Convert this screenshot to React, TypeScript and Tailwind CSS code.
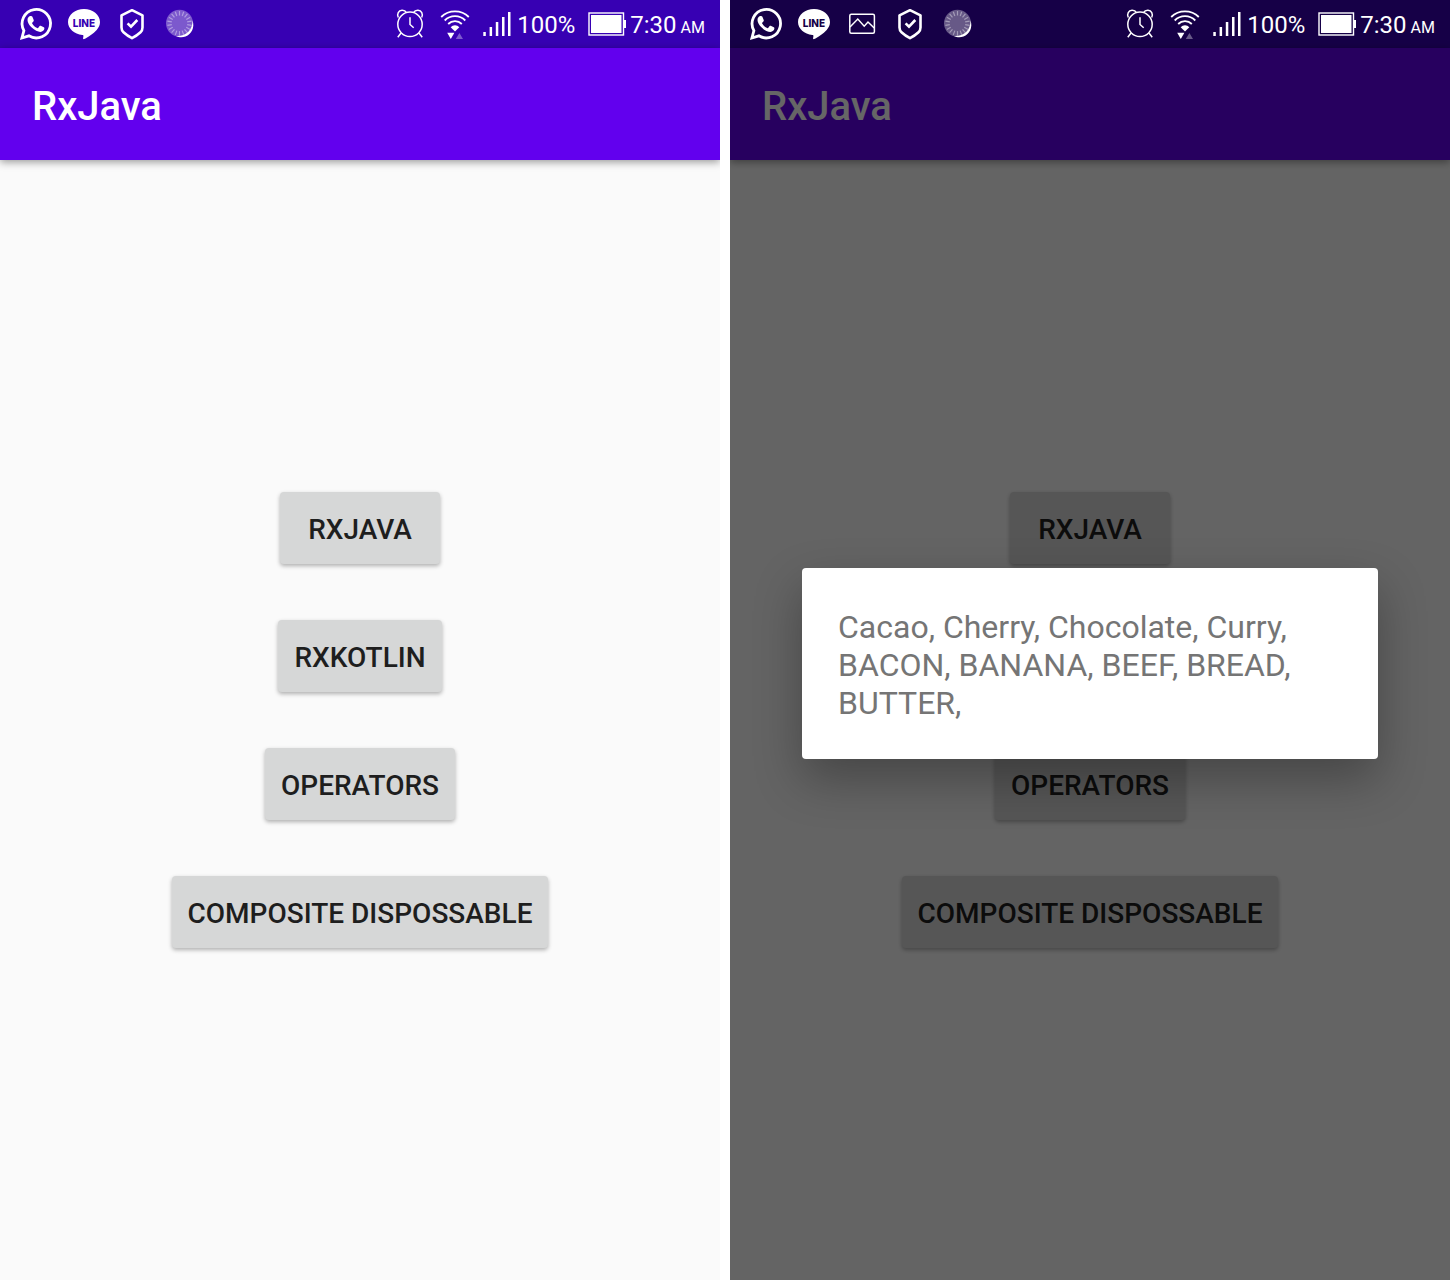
import React from "react";

const actions = ["RXJAVA", "RXKOTLIN", "OPERATORS", "COMPOSITE DISPOSSABLE"];

function WhatsAppIcon() {
  return (
    <svg className="size-12 shrink-0" viewBox="0 0 48 48" fill="none" aria-label="WhatsApp">
      <path
        d="M10.6 38.600 12.600 31.2A14.200 14.200 0 1 1 17.600 36.400Z"
        transform="translate(-.7 -.6)"
        stroke="#fff"
        strokeWidth="2.800"
        strokeLinejoin="miter"
      />
      <path
        d="M18.200 16.1c.9-.4 1.8-.2 2.2.7l1.3 3.1c.2.6.1 1-.3 1.5l-1.2 1.4c-.2.3-.2.5 0 .8 1.2 2 2.8 3.5 5 4.5.4.2.7.1.9-.2l1.5-1.8c.3-.4.6-.5 1.1-.3l3.1 1.5c.5.3.6.5.6 1-.1 2-1.900 3.500-3.900 3.600-2.200.1-5.900-1.400-8.800-4.300-2.600-2.600-4.200-5.300-4.200-7.700 0-1.600 1.100-3.200 2.700-3.800Z"
        fill="#fff"
      />
    </svg>
  );
}

function LineIcon({ ink }: { ink: string }) {
  return (
    <svg className="size-12 shrink-0" viewBox="0 0 48 48" aria-label="LINE">
      <path
        d="M24 9C32.800 9 40 14.700 40 22c0 3-1.200 5.500-3.300 7.900C33.600 33.400 27.500 37.500 24.200 39c-1 .4-1.200 0-1.100-.8l.3-2c.1-.8-.2-1.100-1-1.200C14.300 34.200 8 28.700 8 22 8 14.700 15.200 9 24 9Z"
        fill="#fff"
      />
      <text
        x="24"
        y="26.500"
        textAnchor="middle"
        className="font-['Inter',sans-serif] text-[10px] font-extrabold"
        fill={ink}
      >
        LINE
      </text>
    </svg>
  );
}

function PictureIcon() {
  return (
    <svg className="size-12 shrink-0" viewBox="0 0 48 48" fill="none" stroke="#fff" strokeWidth="1.500" aria-label="Picture">
      <rect x="11.800" y="14.300" width="24.600" height="19" rx="1.500" />
      <path d="M12 27 19.800 19 26.200 26.200 30 22 36.200 28" />
    </svg>
  );
}

function ShieldIcon() {
  return (
    <svg className="size-12 shrink-0" viewBox="0 0 48 48" fill="none" stroke="#fff" strokeWidth="2.600" aria-label="Protected">
      <path d="M24 10.200 34.500 15.300V27.500c0 2-.6 3.400-2 4.700C30.200 34.300 27.300 36.400 24 38.200 20.700 36.400 17.800 34.300 15.500 32.200c-1.400-1.300-2-2.700-2-4.700V15.300Z" strokeLinejoin="round" />
      <path d="m19.600 23.400 3.400 3.300 6.300-6.700" />
    </svg>
  );
}

function SpinnerIcon() {
  const ticks = Array.from({ length: 18 }, (_, i) => i * 20);
  return (
    <svg className="size-12 shrink-0" viewBox="0 0 48 48" aria-label="Loading">
      <circle cx="23.500" cy="23.300" r="13.500" fill="#fff" fillOpacity=".35" />
      <g stroke="#fff" strokeOpacity=".4" strokeWidth="1.200">
        {ticks.map((angle) => (
          <line key={angle} x1="23.500" y1="11" x2="23.500" y2="15.500" transform={`rotate(${angle} 23.500 23.300)`} />
        ))}
      </g>
      <path d="M36.500 20.500C39 27 35.500 34.500 29.500 36.600 26 37.800 22.500 37.300 20 36 30 36.500 36.800 30 36.500 20.500Z" fill="#fff" />
    </svg>
  );
}

function AlarmIcon() {
  return (
    <svg className="h-12 w-10 shrink-0" viewBox="0 0 40 48" fill="none" stroke="#fff" strokeWidth="1.500" aria-label="Alarm">
      <circle cx="16" cy="24.300" r="12.200" />
      <path d="M16 17.300v7.200l3.700 3.200" />
      <path d="M4.300 17.500C2.600 14 4.600 10.500 8 10.300c2-.1 3.600.8 4.600 2.400" />
      <path d="M27.700 17.500c1.700-3.500-.3-7-3.700-7.200-2-.1-3.600.8-4.600 2.400" />
      <path d="m7 33-3.200 4.300M25 33l3.200 4.300" />
    </svg>
  );
}

function WifiIcon() {
  return (
    <svg className="h-12 w-10 shrink-0" viewBox="0 0 40 48" fill="none" aria-label="Wi-Fi">
      <g stroke="#fff" strokeWidth="1.800">
        <path d="M7.200 17a19.500 19.500 0 0 1 27.600 0" />
        <path d="M10.700 20.500a14.500 14.500 0 0 1 20.600 0" />
        <path d="M14.200 24a9.600 9.600 0 0 1 13.600 0" />
      </g>
      <path d="M16.700 27.200c2.300-2.700 6.300-2.700 8.600 0L21 31.500Z" fill="#fff" />
      <path d="M13.200 32.800h7.200L16.800 39Z" fill="#fff" />
      <path d="M21.800 39h7.200l-3.600-6Z" fill="#fff" fillOpacity=".35" />
    </svg>
  );
}

function SignalIcon() {
  return (
    <svg className="h-12 w-10 shrink-0" viewBox="0 0 40 48" fill="#fff" aria-label="Signal">
      <path d="M9.300 32h2.500v4H9.300zM15.600 27h2.500v9h-2.500zM21.800 22h2.500v14h-2.500zM28 17h2.500v19H28zM34 12h2.500v24H34z" />
    </svg>
  );
}

function BatteryIcon() {
  return (
    <svg className="ml-3 h-12 w-10 shrink-0" viewBox="0 0 40 48" aria-label="Battery full">
      <rect x="2" y="13" width="34.500" height="22" fill="none" stroke="#fff" strokeWidth="1.400" />
      <rect x="4" y="15" width="30.500" height="18" fill="#fff" />
      <rect x="36.500" y="20" width="2.500" height="8" fill="#fff" />
    </svg>
  );
}

function StatusBar({ dimmed }: { dimmed: boolean }) {
  return (
    <div
      className={`flex h-12 items-center justify-between pr-[15px] pl-3 text-white ${
        dimmed ? "bg-[#160047]" : "bg-[#3700b3]"
      }`}
    >
      <div className="flex items-center">
        <WhatsAppIcon />
        <LineIcon ink={dimmed ? "#160047" : "#3700b3"} />
        {dimmed && <PictureIcon />}
        <ShieldIcon />
        <SpinnerIcon />
      </div>
      <div className="flex items-center text-2xl">
        <AlarmIcon />
        <WifiIcon />
        <SignalIcon />
        <span className="ml-[3px] pt-0.5">100%</span>
        <BatteryIcon />
        <span className="ml-[3px] pt-0.5">
          7:30<span className="ml-1 text-base">AM</span>
        </span>
      </div>
    </div>
  );
}

function Phone({ message }: { message?: string }) {
  const dimmed = message !== undefined;
  return (
    <section className="flex flex-col overflow-hidden bg-[#fafafa]">
      <StatusBar dimmed={dimmed} />
      <div className="relative flex grow flex-col">
        <header className="flex h-28 items-center bg-[#6200ee] px-8 pt-1.5 shadow-[0_2px_8px_rgba(0,0,0,0.4)]">
          <h1 className="text-[40px] font-medium text-white">RxJava</h1>
        </header>
        <main className="flex grow flex-col items-center justify-center gap-14">
          {actions.map((label) => (
            <button
              key={label}
              type="button"
              className="h-18 min-w-40 rounded-[4px] bg-[#d6d7d7] px-4 pt-[3px] text-[28px] font-medium text-[#1e1e1e] shadow-[0_2px_4px_rgba(0,0,0,0.3)]"
            >
              {label}
            </button>
          ))}
        </main>
        {dimmed && (
          <div className="absolute inset-0 flex items-center justify-center bg-black/60 pb-0.5">
            <div
              role="dialog"
              aria-label="Result"
              className="w-4/5 rounded-[4px] bg-white px-9 pt-10 pb-[37px] shadow-[0_20px_48px_rgba(0,0,0,0.3)]"
            >
              <p className="text-[32px] leading-[38px] text-[#757575]">{message}</p>
            </div>
          </div>
        )}
      </div>
    </section>
  );
}

export default function App() {
  return (
    <div className="grid min-h-screen grid-cols-2 gap-[10px] bg-white font-['Roboto',sans-serif]">
      <Phone />
      <Phone message="Cacao, Cherry, Chocolate, Curry, BACON, BANANA, BEEF, BREAD, BUTTER," />
    </div>
  );
}
